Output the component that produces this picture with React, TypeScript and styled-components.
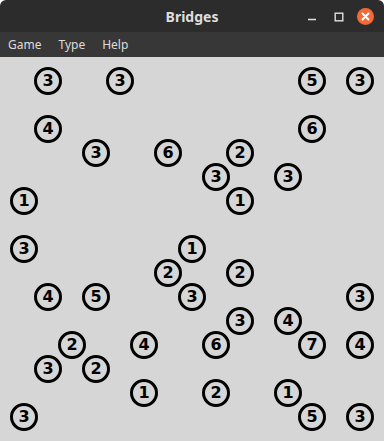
import styled, { createGlobalStyle } from "styled-components";

const GlobalStyle = createGlobalStyle`
	html, body {
		margin: 0;
		padding: 0;
		background: #ffffff;
	}
	#root {
		width: 384px;
		height: 441px;
	}
`;

const WindowFrame = styled.div`
	width: 384px;
	height: 441px;
	display: flex;
	flex-direction: column;
	border-radius: 6px 6px 0 0;
	overflow: hidden;
	font-family: "Noto Sans", "DejaVu Sans", sans-serif;
`;

const TitleBar = styled.div`
	height: 32px;
	background: #2c2c2c;
	display: grid;
	grid-template-columns: 1fr auto 1fr;
	align-items: center;
	& > h1 {
		margin: 0;
		font-size: 14px;
		font-weight: 700;
		color: #dedede;
		grid-column: 2;
	}
`;

const Controls = styled.div`
	grid-column: 3;
	justify-self: end;
	display: flex;
	height: 100%;
	padding-right: 5px;
`;

const CtrlButton = styled.div`
	width: 27px;
	height: 100%;
	display: flex;
	justify-content: center;
	align-items: center;
	padding-top: 1px;
	box-sizing: border-box;
`;

const CloseDot = styled.div`
	width: 17px;
	height: 17px;
	border-radius: 50%;
	background: #f26a35;
	display: flex;
	justify-content: center;
	align-items: center;
`;

const MenuBar = styled.div`
	height: 25px;
	background: #373737;
	display: flex;
	align-items: center;
	padding-left: 8px;
	gap: 17px;
	& > span {
		font-size: 12px;
		color: #dcdcdc;
	}
`;

const Board = styled.div`
	flex: 1;
	background: #d6d6d6;
	padding: 12px;
	display: grid;
	grid-template-columns: repeat(15, 24px);
	grid-template-rows: repeat(15, 24px);
`;

const Island = styled.div<{ $col: number; $row: number }>`
	grid-column: ${(p) => p.$col};
	grid-row: ${(p) => p.$row};
	width: 28px;
	height: 28px;
	margin: -2px;
	box-sizing: border-box;
	border: 3px solid #000;
	border-radius: 50%;
	display: flex;
	justify-content: center;
	align-items: center;
	font-family: "DejaVu Sans", sans-serif;
	font-weight: 700;
	font-size: 16px;
	color: #000;
	line-height: 1;
`;

// [column, row, bridges]
const islands: [number, number, number][] = [
	[2, 1, 3], [5, 1, 3], [13, 1, 5], [15, 1, 3],
	[2, 3, 4], [13, 3, 6],
	[4, 4, 3], [7, 4, 6], [10, 4, 2],
	[9, 5, 3], [12, 5, 3],
	[1, 6, 1], [10, 6, 1],
	[1, 8, 3], [8, 8, 1],
	[7, 9, 2], [10, 9, 2],
	[2, 10, 4], [4, 10, 5], [8, 10, 3], [15, 10, 3],
	[10, 11, 3], [12, 11, 4],
	[3, 12, 2], [6, 12, 4], [9, 12, 6], [13, 12, 7], [15, 12, 4],
	[2, 13, 3], [4, 13, 2],
	[6, 14, 1], [9, 14, 2], [12, 14, 1],
	[1, 15, 3], [13, 15, 5], [15, 15, 3],
];

const App = () => {
	return (
		<>
			<GlobalStyle />
			<WindowFrame>
				<TitleBar>
					<h1>Bridges</h1>
					<Controls>
						<CtrlButton>
							<svg width="10" height="10" viewBox="0 0 10 10">
								<line x1="1" y1="7.5" x2="9" y2="7.5" stroke="#e0e0e0" strokeWidth="1.4" />
							</svg>
						</CtrlButton>
						<CtrlButton>
							<svg width="10" height="10" viewBox="0 0 10 10">
								<rect x="1.2" y="1.2" width="7.6" height="7.6" fill="none" stroke="#e0e0e0" strokeWidth="1.4" />
							</svg>
						</CtrlButton>
						<CtrlButton>
							<CloseDot>
								<svg width="9" height="9" viewBox="0 0 9 9">
									<path d="M1.5 1.5 L7.5 7.5 M7.5 1.5 L1.5 7.5" stroke="#fff" strokeWidth="2" strokeLinecap="round" />
								</svg>
							</CloseDot>
						</CtrlButton>
					</Controls>
				</TitleBar>
				<MenuBar>
					<span>Game</span>
					<span>Type</span>
					<span>Help</span>
				</MenuBar>
				<Board>
					{islands.map(([c, r, n]) => (
						<Island key={`${c}-${r}`} $col={c} $row={r}>
							{n}
						</Island>
					))}
				</Board>
			</WindowFrame>
		</>
	);
};

export default App;
